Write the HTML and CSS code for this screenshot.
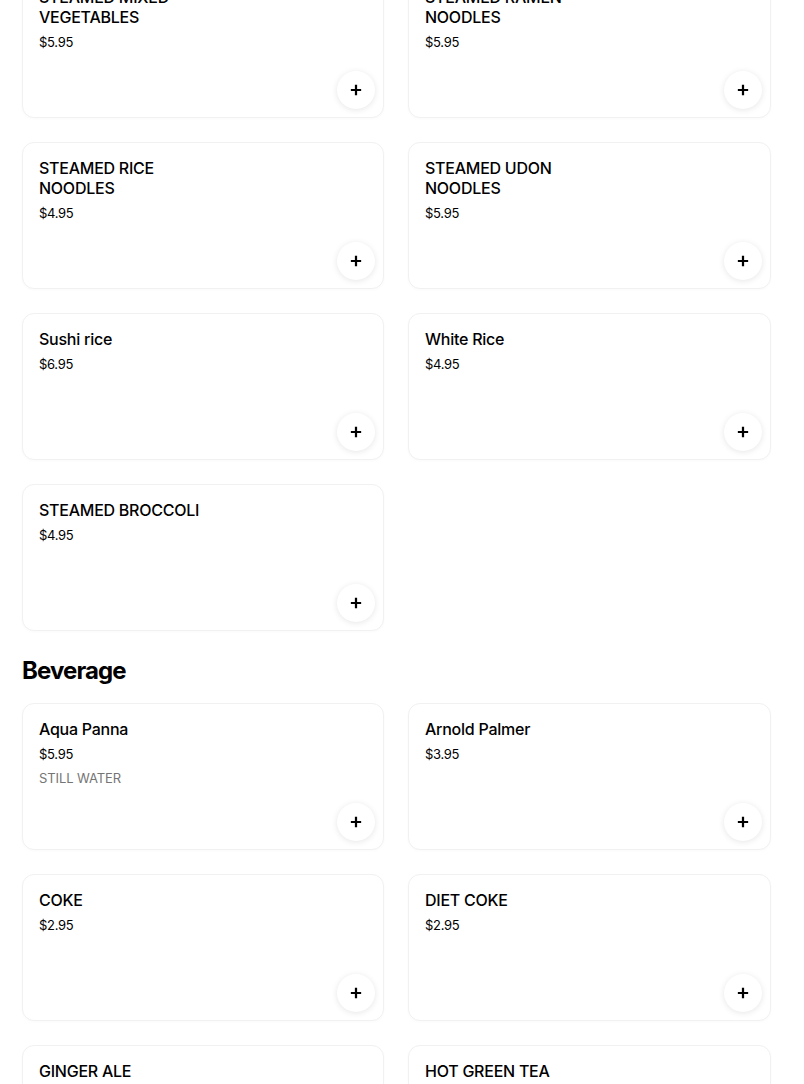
FILE: index.html
```html
<!DOCTYPE html>
<html>
<head>
<meta charset="utf-8">
<link rel="stylesheet" href="styles.css">
</head>
<body>
<main class="menu">
  <section class="section">
    <div class="grid">
      <div class="card"><div class="title">STEAMED MIXED VEGETABLES</div><div class="price">$5.95</div><button class="add"><svg viewBox="0 0 14 14"><path d="M7 1v12M1 7h12"/></svg></button></div>
      <div class="card"><div class="title">STEAMED RAMEN NOODLES</div><div class="price">$5.95</div><button class="add"><svg viewBox="0 0 14 14"><path d="M7 1v12M1 7h12"/></svg></button></div>
      <div class="card"><div class="title">STEAMED RICE NOODLES</div><div class="price">$4.95</div><button class="add"><svg viewBox="0 0 14 14"><path d="M7 1v12M1 7h12"/></svg></button></div>
      <div class="card"><div class="title">STEAMED UDON NOODLES</div><div class="price">$5.95</div><button class="add"><svg viewBox="0 0 14 14"><path d="M7 1v12M1 7h12"/></svg></button></div>
      <div class="card"><div class="title">Sushi rice</div><div class="price">$6.95</div><button class="add"><svg viewBox="0 0 14 14"><path d="M7 1v12M1 7h12"/></svg></button></div>
      <div class="card"><div class="title">White Rice</div><div class="price">$4.95</div><button class="add"><svg viewBox="0 0 14 14"><path d="M7 1v12M1 7h12"/></svg></button></div>
      <div class="card"><div class="title">STEAMED BROCCOLI</div><div class="price">$4.95</div><button class="add"><svg viewBox="0 0 14 14"><path d="M7 1v12M1 7h12"/></svg></button></div>
    </div>
  </section>
  <section class="section">
    <h2 class="heading">Beverage</h2>
    <div class="grid">
      <div class="card"><div class="title">Aqua Panna</div><div class="price">$5.95</div><div class="desc">STILL WATER</div><button class="add"><svg viewBox="0 0 14 14"><path d="M7 1v12M1 7h12"/></svg></button></div>
      <div class="card"><div class="title">Arnold Palmer</div><div class="price">$3.95</div><button class="add"><svg viewBox="0 0 14 14"><path d="M7 1v12M1 7h12"/></svg></button></div>
      <div class="card"><div class="title">COKE</div><div class="price">$2.95</div><button class="add"><svg viewBox="0 0 14 14"><path d="M7 1v12M1 7h12"/></svg></button></div>
      <div class="card"><div class="title">DIET COKE</div><div class="price">$2.95</div><button class="add"><svg viewBox="0 0 14 14"><path d="M7 1v12M1 7h12"/></svg></button></div>
      <div class="card"><div class="title">GINGER ALE</div><div class="price">$2.95</div><button class="add"><svg viewBox="0 0 14 14"><path d="M7 1v12M1 7h12"/></svg></button></div>
      <div class="card"><div class="title">HOT GREEN TEA</div><div class="price">$2.95</div><button class="add"><svg viewBox="0 0 14 14"><path d="M7 1v12M1 7h12"/></svg></button></div>
    </div>
  </section>
</main>
</body>
</html>
```
FILE: styles.css
```css
html, body {
  margin: 0;
  padding: 0;
  background: #fff;
  overflow: hidden;
}
body {
  font-family: Inter, "Liberation Sans", Arial, sans-serif;
  color: #000;
}
.menu {
  width: 749px;
  padding: 0 33px 0 22px;
  margin-top: -29px;
  display: flex;
  flex-direction: column;
  gap: 24px;
}
.section {
  display: flex;
  flex-direction: column;
}
.heading {
  margin: 0 0 16px;
  font-size: 24px;
  line-height: 32px;
  font-weight: 700;
  letter-spacing: -0.9px;
}
.grid {
  display: grid;
  grid-template-columns: 362px 1fr;
  gap: 24px;
}
.card {
  position: relative;
  box-sizing: border-box;
  height: 147px;
  border: 1px solid #f1f1f1;
  border-radius: 12px;
  padding: 15px 16px;
  box-shadow: 0 1px 3px rgba(0,0,0,0.025);
  background: #fff;
}
.title {
  font-size: 16px;
  line-height: 20px;
  font-weight: 500;
  max-width: 180px;
  letter-spacing: -0.25px;
}
.price {
  margin-top: 5px;
  font-size: 13px;
  line-height: 20px;
  letter-spacing: -0.3px;
}
.desc {
  margin-top: 4px;
  font-size: 13px;
  line-height: 20px;
  color: #757575;
  letter-spacing: -0.1px;
}
.add {
  position: absolute;
  right: 8px;
  bottom: 8px;
  width: 38px;
  height: 38px;
  border: none;
  border-radius: 50%;
  background: #fff;
  box-shadow: 0 1px 6px rgba(0,0,0,0.1);
  display: flex;
  align-items: center;
  justify-content: center;
  padding: 0;
}
.add svg {
  width: 12px;
  height: 12px;
  fill: none;
  stroke: #000;
  stroke-width: 2.6;
}
```
